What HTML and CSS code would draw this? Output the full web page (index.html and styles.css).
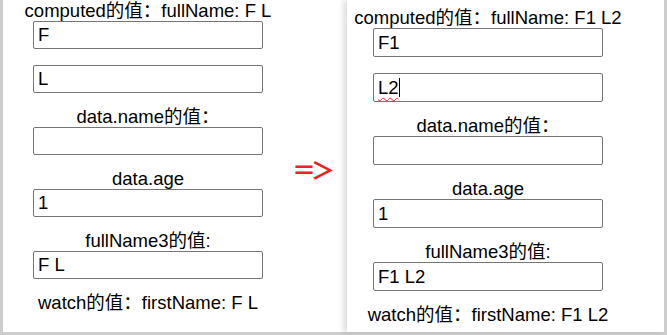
FILE: index.html
```html
<!DOCTYPE html>
<html lang="zh-CN">
<head>
    <meta charset="UTF-8">
    <meta name="viewport" content="width=device-width, initial-scale=1.0">
    <title>computed / watch</title>
    <link rel="stylesheet" href="styles.css">
</head>
<body>
    <div class="stage">
        <!-- 修改前 -->
        <section class="shot shot-before">
            <div class="column">
                <p class="label">computed的值：fullName: F L</p>
                <input class="field" type="text" value="F">
                <input class="field gap" type="text" value="L">
                <p class="label">data.name的值：</p>
                <input class="field" type="text" value="">
                <p class="label">data.age</p>
                <input class="field" type="text" value="1">
                <p class="label">fullName3的值:</p>
                <input class="field" type="text" value="F L">
                <p class="label">watch的值：firstName: F L</p>
            </div>
            <span class="arrow">＝＞</span>
        </section>

        <!-- 修改后 -->
        <section class="shot shot-after">
            <div class="column">
                <p class="label">computed的值：fullName: F1 L2</p>
                <input class="field" type="text" value="F1">
                <div class="field gap editing"><span class="typo">L2</span><span class="caret"></span></div>
                <p class="label">data.name的值：</p>
                <input class="field" type="text" value="">
                <p class="label">data.age</p>
                <input class="field" type="text" value="1">
                <p class="label">fullName3的值:</p>
                <input class="field" type="text" value="F1 L2">
                <p class="label">watch的值：firstName: F1 L2</p>
            </div>
        </section>
    </div>
</body>
</html>
```

FILE: styles.css
```css
/* Общие стили */
body {
    margin: 0;
    padding: 0;
    background-color: #cdcdcd;
    font-family: 'Liberation Sans', 'Noto Sans CJK SC', sans-serif;
    overflow: hidden;
}

.stage {
    display: flex;
    height: 335px;
    padding-left: 3px;
    box-sizing: border-box;
}

/* Скриншоты */
.shot {
    position: relative;
    height: 332px;
    background-color: #fff;
}

.shot-before {
    width: 344px;
    padding-top: 1px;
    box-sizing: border-box;
}

.shot-after {
    width: 317px;
    padding-top: 8px;
    box-sizing: border-box;
    box-shadow: -4px 0 5px rgba(0, 0, 0, 0.12);
}

.column {
    width: 282px;
    display: flex;
    flex-direction: column;
    align-items: center;
}

.shot-before .column {
    margin-left: 4px;
}

/* Подписи и поля */
.label {
    margin: 14px 0 0;
    font-size: 18.5px;
    line-height: 20px;
    color: #000;
    white-space: nowrap;
}

.label:first-child {
    margin-top: 0;
}

.field {
    width: 230px;
    height: 28px;
    margin: 0;
    padding: 1px 4px;
    box-sizing: border-box;
    border: 1px solid #767676;
    border-radius: 2px;
    font-family: 'Liberation Sans', sans-serif;
    font-size: 18.5px;
    color: #000;
    background-color: #fff;
    outline: none;
}

.field.gap {
    margin-top: 16px;
}

.shot-after .field {
    height: 29px;
}

.editing {
    display: flex;
    align-items: center;
    line-height: 22px;
}

.typo {
    text-decoration: underline wavy #e0282e;
    text-decoration-thickness: 1px;
    text-underline-offset: 3px;
}

.caret {
    width: 1px;
    height: 19px;
    background-color: #000;
}

/* Стрелка */
.arrow {
    position: absolute;
    left: 289px;
    top: 152px;
    font-family: 'Noto Sans CJK SC', sans-serif;
    font-size: 24px;
    font-weight: 700;
    line-height: 34px;
    color: #f2201c;
    letter-spacing: -5px;
}
```
